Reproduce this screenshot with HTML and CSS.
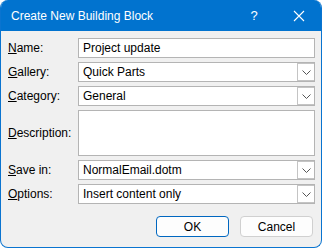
FILE: index.html
```html
<!DOCTYPE html>
<html lang="en">
<head>
  <meta charset="UTF-8">
  <title>Create New Building Block</title>
  <link rel="stylesheet" href="styles.css">
</head>
<body>
  <div class="dialog">
    <div class="titlebar">
      <span class="title">Create New Building Block</span>
      <span class="help">?</span>
      <span class="close">
        <svg width="12" height="12" viewBox="0 0 12 12"><path d="M1 1L11 11M11 1L1 11" stroke="#fff" stroke-width="1.1"/></svg>
      </span>
    </div>
    <div class="content">
      <div class="row">
        <label><u>N</u>ame:</label>
        <div class="field">Project update</div>
      </div>
      <div class="row">
        <label><u>G</u>allery:</label>
        <div class="field select">Quick Parts<span class="drop"><svg width="9" height="5" viewBox="0 0 9 5"><path d="M0.5 0.5L4.5 4.5L8.5 0.5" fill="none" stroke="#555" stroke-width="1"/></svg></span></div>
      </div>
      <div class="row">
        <label><u>C</u>ategory:</label>
        <div class="field select">General<span class="drop"><svg width="9" height="5" viewBox="0 0 9 5"><path d="M0.5 0.5L4.5 4.5L8.5 0.5" fill="none" stroke="#555" stroke-width="1"/></svg></span></div>
      </div>
      <div class="row tall">
        <label><u>D</u>escription:</label>
        <div class="field"></div>
      </div>
      <div class="row">
        <label><u>S</u>ave in:</label>
        <div class="field select">NormalEmail.dotm<span class="drop"><svg width="9" height="5" viewBox="0 0 9 5"><path d="M0.5 0.5L4.5 4.5L8.5 0.5" fill="none" stroke="#555" stroke-width="1"/></svg></span></div>
      </div>
      <div class="row">
        <label><u>O</u>ptions:</label>
        <div class="field select">Insert content only<span class="drop"><svg width="9" height="5" viewBox="0 0 9 5"><path d="M0.5 0.5L4.5 4.5L8.5 0.5" fill="none" stroke="#555" stroke-width="1"/></svg></span></div>
      </div>
      <div class="buttons">
        <button class="primary">OK</button>
        <button>Cancel</button>
      </div>
    </div>
  </div>
</body>
</html>
```

FILE: styles.css
```css
body {
  margin: 0;
  background: #fff;
  font-family: "Liberation Sans", Arial, sans-serif;
  font-size: 12px;
  color: #000;
}
.dialog {
  width: 322px;
  height: 248px;
  box-sizing: border-box;
  border: 1px solid #0a74d0;
  border-top: none;
  border-radius: 8px;
  overflow: hidden;
  background: #f0f0f0;
  display: flex;
  flex-direction: column;
}
.titlebar {
  height: 31px;
  background: #0173cf;
  color: #fff;
  display: flex;
  align-items: center;
  padding-left: 10px;
  flex-shrink: 0;
}
.title {
  flex: 1;
  font-size: 12px;
}
.help {
  width: 26px;
  font-size: 13px;
  margin-right: 10px;
  text-align: center;
}
.close {
  width: 44px;
  display: flex;
  justify-content: center;
}
.content {
  padding: 7px 6px 0 6px;
}
.row {
  display: flex;
  align-items: center;
  height: 20px;
  margin-bottom: 4px;
}
.row.tall {
  height: 46px;
}
label {
  width: 71px;
  padding-left: 1px;
  box-sizing: border-box;
}
.field {
  width: 237px;
  height: 100%;
  box-sizing: border-box;
  border: 1px solid #b4b4b4;
  background: #fff;
  padding-left: 4px;
  display: flex;
  align-items: center;
}
.select {
  justify-content: space-between;
  padding-right: 0;
}
.drop {
  width: 17px;
  height: 100%;
  box-sizing: border-box;
  border: 1px solid #c4c4c4;
  border-right: none;
  display: flex;
  align-items: center;
  justify-content: center;
}
.buttons {
  display: flex;
  justify-content: flex-end;
  gap: 11px;
  margin-top: 12px;
  padding-right: 2px;
}
button {
  width: 73px;
  height: 21px;
  font-family: inherit;
  font-size: 12px;
  background: #fdfdfd;
  border: 1px solid #d0d0d0;
  border-radius: 4px;
  padding: 0;
  color: #000;
}
button.primary {
  border-color: #0067c0;
}
```
